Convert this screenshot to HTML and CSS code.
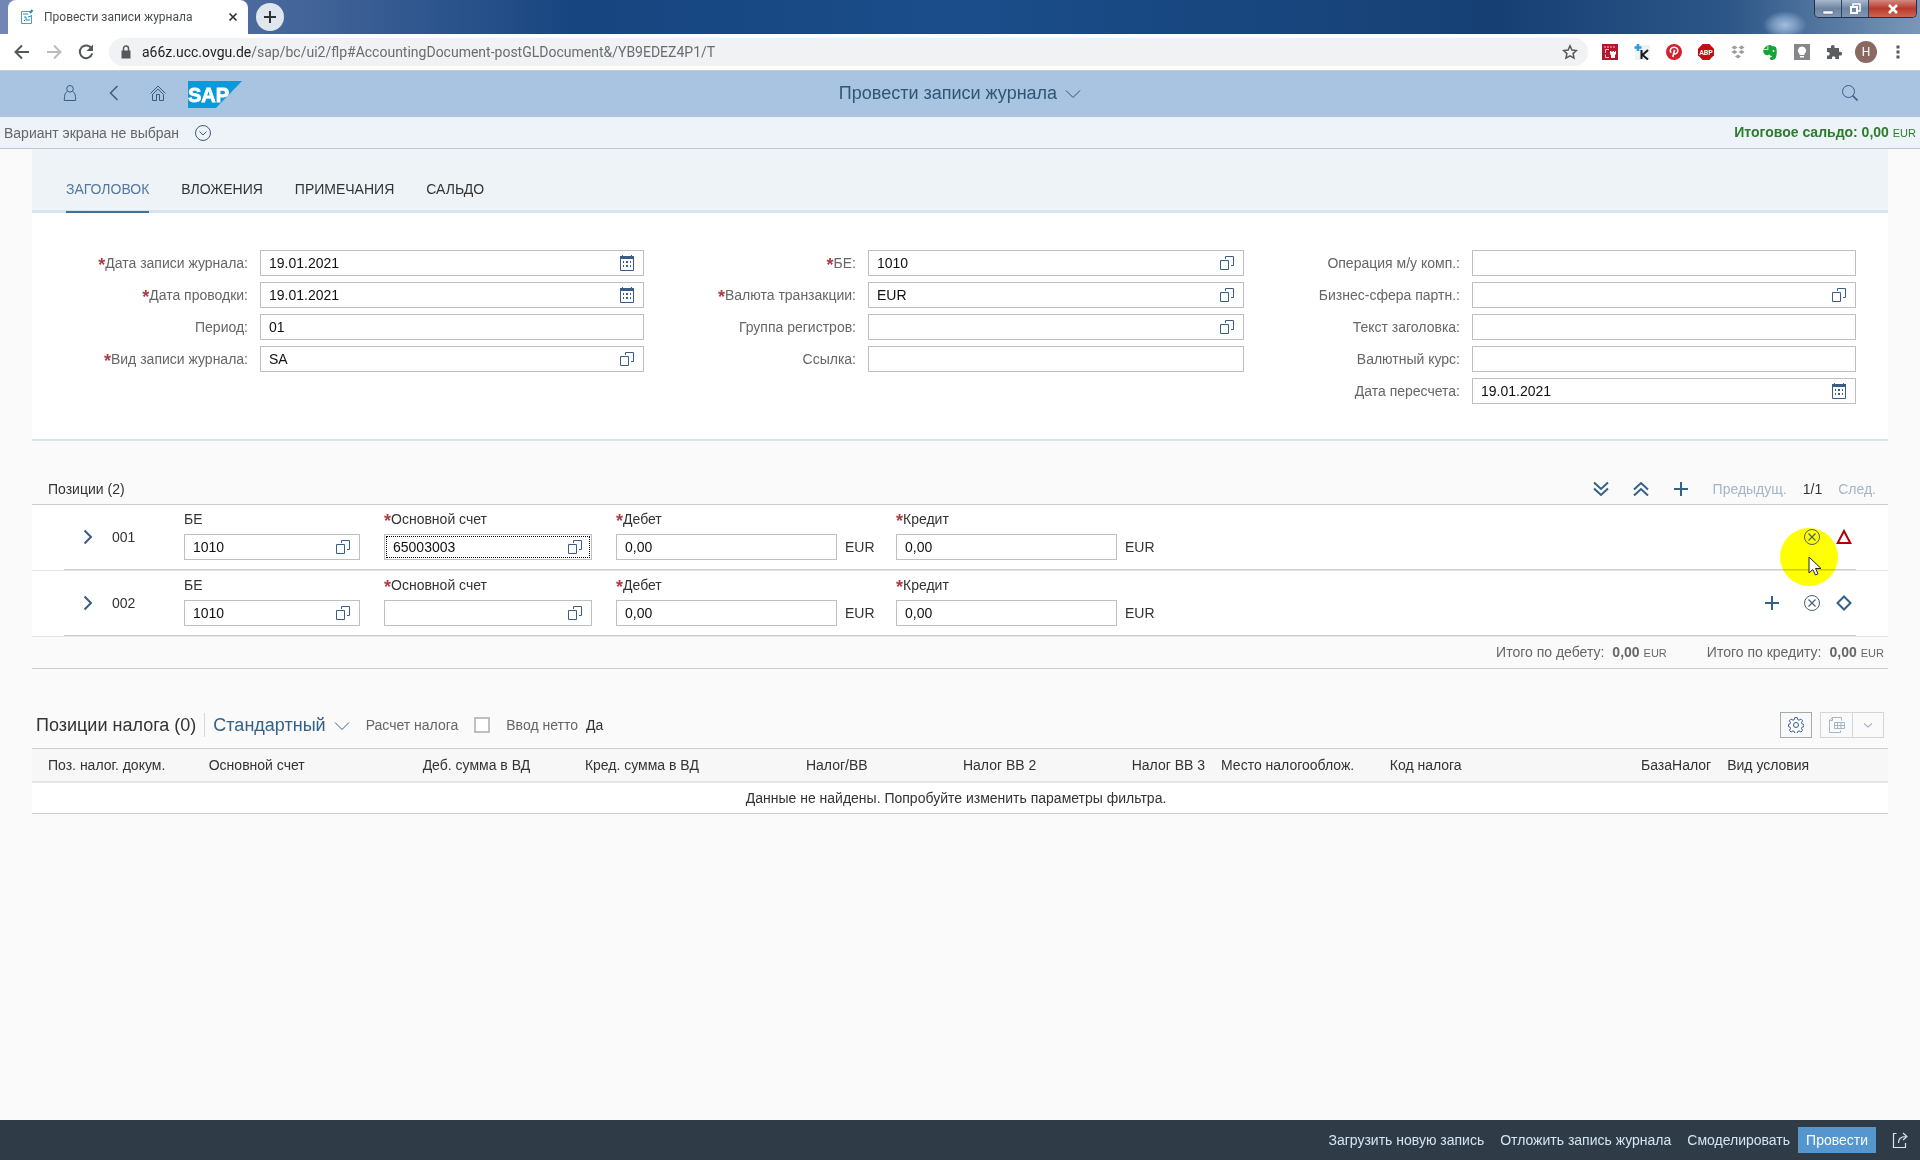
FILE: index.html
```html
<!DOCTYPE html>
<html lang="ru">
<head>
<meta charset="utf-8">
<title>Провести записи журнала</title>
<link rel="stylesheet" href="styles.css">
</head>
<body>
<svg class="sprite" aria-hidden="true">
  <symbol id="i-calendar" viewBox="0 0 16 16"><path d="M1.500 3v12.500h13V3" fill="none" stroke="currentColor"/><path d="M1 1h2V0h1v1h8V0h1v1h2v3H1z" fill="currentColor"/><path d="M4 6h1v2H4zM7 6h2v2H7zM11 6h1v2h-1zM4 10h1v2H4zM7 10h2v2H7zM11 10h1v2h-1z" fill="currentColor"/></symbol>
  <symbol id="i-help" viewBox="0 0 16 16"><path d="M6.500 4V1.500h8v9H12M1.500 5.500h8v9h-8z" fill="none" stroke="currentColor"/></symbol>
  <symbol id="i-right" viewBox="0 0 16 16"><path d="M4.500 1.500L11 8l-6.500 6.500" fill="none" stroke="currentColor" stroke-width="2"/></symbol>
  <symbol id="i-left" viewBox="0 0 16 16"><path d="M11.500 1L4.500 8l7 7" fill="none" stroke="currentColor" stroke-width="1.500"/></symbol>
  <symbol id="i-down" viewBox="0 0 16 16"><path d="M1 5.500l7 7 7-7" fill="none" stroke="currentColor"/></symbol>
  <symbol id="i-expand" viewBox="0 0 16 16"><path d="M1 1.500L8 8l7-6.500M1 7.500L8 14l7-6.500" fill="none" stroke="currentColor" stroke-width="2"/></symbol>
  <symbol id="i-collapse" viewBox="0 0 16 16"><path d="M1 8.500L8 2l7 6.500M1 14.500L8 8l7 6.500" fill="none" stroke="currentColor" stroke-width="2"/></symbol>
  <symbol id="i-plus" viewBox="0 0 16 16"><path d="M8 1v14M1 8h14" fill="none" stroke="currentColor" stroke-width="2"/></symbol>
  <symbol id="i-decline" viewBox="0 0 16 16"><circle cx="8" cy="8" r="7.500" fill="none" stroke="currentColor"/><path d="M4.500 4.500l7 7M11.500 4.500l-7 7" stroke="currentColor" stroke-width="1.200"/></symbol>
</svg>

<header class="browser">
  <div class="titlebar">
    <div class="tab">
      <svg class="favicon" viewBox="0 0 14 16" aria-hidden="true"><path d="M10 2.500H1.500v12h10V6" fill="none" stroke="#4a9fc9"/><path d="M3 5h5M4 8h2v3h4M4 11l1 1M8 8l3-1" stroke="#2a88bb" fill="none"/><path d="M10 4l2.500-3" stroke="#2a88bb" stroke-width="2"/></svg>
      <span class="tab-title">Провести записи журнала</span>
      <button class="tab-close" aria-label="Закрыть вкладку"><svg viewBox="0 0 10 10"><path d="M1.500 1.500l7 7M8.500 1.500l-7 7" stroke="#333" stroke-width="1.700"/></svg></button>
    </div>
    <button class="tab-new" aria-label="Новая вкладка"><svg viewBox="0 0 12 12"><path d="M6 0v12M0 6h12" stroke="#2e3338" stroke-width="2"/></svg></button>
    <div class="win-buttons">
      <button class="win" aria-label="Свернуть"><svg viewBox="0 0 12 12"><path d="M1 8h10v3H1z" fill="#fff" stroke="#556" stroke-width=".5"/></svg></button>
      <button class="win" aria-label="Развернуть"><svg viewBox="0 0 12 12"><path d="M4 3V1h7v7H9" fill="none" stroke="#fff" stroke-width="1.500"/><path d="M2 4h6v6H2z" fill="none" stroke="#fff" stroke-width="2"/></svg></button>
      <button class="win win-close" aria-label="Закрыть"><svg viewBox="0 0 12 12"><path d="M2 2l8 8M10 2l-8 8" stroke="#fff" stroke-width="2.600"/></svg></button>
    </div>
  </div>
  <div class="navbar">
    <div class="nav-buttons">
      <button aria-label="Назад"><svg viewBox="0 0 16 16"><path d="M15 8H2M8 1.500L1.500 8 8 14.500" fill="none" stroke="#54585c" stroke-width="2"/></svg></button>
      <button aria-label="Вперёд"><svg viewBox="0 0 16 16"><path d="M1 8h13M8 1.500L14.500 8 8 14.500" fill="none" stroke="#babcbe" stroke-width="2"/></svg></button>
      <button aria-label="Обновить"><svg viewBox="0 0 16 16"><path d="M13.500 4.500A6.300 6.300 0 1 0 14.200 9.500" fill="none" stroke="#54585c" stroke-width="2"/><path d="M15 0.500V7H8.500z" fill="#54585c"/></svg></button>
    </div>
    <div class="address">
      <svg class="lock" viewBox="0 0 10 14" aria-hidden="true"><path d="M0.500 5.500h9v8h-9z" fill="#54585c"/><path d="M2.500 6V3.500a2.500 2.500 0 0 1 5 0V6" fill="none" stroke="#54585c" stroke-width="1.500"/></svg>
      <span class="url"><span class="host">a66z.ucc.ovgu.de</span>/sap/bc/ui2/flp#AccountingDocument-postGLDocument&amp;/YB9EDEZ4P1/T</span>
      <svg class="star" viewBox="0 0 16 16" aria-hidden="true"><path d="M8 1.800l1.900 4.200 4.500.5-3.300 3.100.9 4.500L8 11.800l-4 2.300.9-4.500L1.600 6.500 6.100 6z" fill="none" stroke="#54585c" stroke-width="1.500"/></svg>
    </div>
    <div class="extensions">
      <svg viewBox="0 0 16 16"><path d="M0 0h16v16H0z" fill="#b3172c"/><path d="M2 3h12" stroke="#f0c4c9" stroke-dasharray="2 1"/><path d="M7 5.500H3.500V9M3.500 10.500v3H7" stroke="#f0c4c9" fill="none"/><path d="M8 7h1.500v1h1V7H12v1h1V7h1v3l-1 1v3H9v-3L8 10z" fill="#fff"/></svg>
      <svg viewBox="0 0 16 16"><path d="M1 1h15v15H1z" fill="#eef1f5"/><path d="M4 0v7M0.500 3.500h7" stroke="#2a9fd8" stroke-width="2.500"/><path d="M7.500 6v9M14 6l-5.500 5 5.500 4.500" fill="none" stroke="#15181c" stroke-width="2"/></svg>
      <svg viewBox="0 0 16 16"><circle cx="8" cy="8" r="8" fill="#d6202f"/><path d="M5 8.800C3.300 6 5 3.200 8.200 3.200c3 0 4 2.300 3.400 4.400-.7 2.600-3.200 2.900-3.700 1.500M8.600 5.800L6.800 13" fill="none" stroke="#fff" stroke-width="1.600"/></svg>
      <svg viewBox="0 0 16 16"><path d="M4.700 0h6.600L16 4.700v6.600L11.300 16H4.700L0 11.300V4.700z" fill="#c20d12"/><text x="8" y="10.500" text-anchor="middle" font-size="7" font-weight="700" fill="#fff">ABP</text></svg>
      <svg viewBox="0 0 16 16"><path d="M4.500 1.500l3 2-3 2-3-2zM11.500 1.500l3 2-3 2-3-2zM4.500 6l3 2-3 2-3-2zM11.500 6l3 2-3 2-3-2zM8 10.500l3 2-3 2-3-2z" fill="#999da0"/></svg>
      <svg viewBox="0 0 16 16"><path d="M5.500 1L1.500 5h4zM6.300 1v4.800H1.200C1 9 2.300 11 5 11.200c1.500 0 1.700-1 2.300-.7.800 1.600 2.300 1 2.600 1.800.4 1-2 .4-2 2.200 0 1 1 1.500 2.300 1.500 3.700 0 4.800-4 4.500-9.500C14.500 2 13 2.500 10 2 9 .8 7.500.8 6.300 1z" fill="#14a437"/><circle cx="11.500" cy="7" r="1" fill="#fff"/></svg>
      <svg viewBox="0 0 16 16"><path d="M0 0h16v16H0z" fill="#85878a"/><path d="M8 2.500a4 4 0 0 1 2.500 7.200V11h-5V9.700A4 4 0 0 1 8 2.500zM6 12h4v1.500H6z" fill="#fff"/></svg>
      <svg viewBox="0 0 16 16"><path d="M1 4h4.200C4.500 2 5.300 1 6.800 1s2.300 1 1.700 3H13v4c2-.6 3 .2 3 1.700s-1 2.300-3 1.700V15H9.300c.5-2-.2-2.800-1.600-2.800S5.600 13 6 15H1v-3.500c2 .4 2.700-.4 2.700-1.700S3 7.700 1 8z" fill="#5a5e62"/></svg>
      <span class="avatar">H</span>
      <svg viewBox="0 0 16 16"><path d="M6.500 1.500h3v3h-3zM6.500 6.500h3v3h-3zM6.500 11.500h3v3h-3z" fill="#54585c"/></svg>
    </div>
  </div>
</header>

<header class="shell">
  <nav class="shell-nav">
    <button aria-label="Профиль"><svg viewBox="0 0 16 16"><circle cx="8" cy="3.800" r="3.300" fill="none" stroke="currentColor"/><path d="M5.500 6.500C3.500 7.500 2.500 8.500 2.300 15.500h11.400C13.500 8.500 12.500 7.500 10.500 6.500" fill="none" stroke="currentColor"/></svg></button>
    <button aria-label="Назад"><svg><use href="#i-left"/></svg></button>
    <button aria-label="Домой"><svg viewBox="0 0 16 16"><path d="M.5 8.500L8 1l7.500 7.500M2.500 9.500L8 4l5.500 5.500V15.500h-4v-6h-3v6h-4V9" fill="none" stroke="currentColor"/></svg></button>
    <a class="logo" href="#" aria-label="SAP"><svg viewBox="0 0 54 27"><path d="M0 0h54L28 27H0z" fill="#0a9ad9"/><text x="0" y="21" font-size="20" font-weight="700" fill="#fff" stroke="#fff" stroke-width=".8">SAP</text></svg></a>
  </nav>
  <button class="shell-title"><span>Провести записи журнала</span><svg><use href="#i-down"/></svg></button>
  <button class="shell-search" aria-label="Поиск"><svg viewBox="0 0 16 16"><circle cx="6.500" cy="6.500" r="6" fill="none" stroke="currentColor"/><path d="M10.500 10.500l5 5" stroke="currentColor" stroke-width="1.600"/></svg></button>
</header>

<div class="variant-bar">
  <button class="variant"><span>Вариант экрана не выбран</span><svg viewBox="0 0 16 16"><circle cx="8" cy="8" r="7.500" fill="none" stroke="currentColor"/><path d="M4.500 6.500L8 10l3.500-3.500" fill="none" stroke="currentColor"/></svg></button>
  <p class="balance"><b>Итоговое сальдо: 0,00</b> <small>EUR</small></p>
</div>

<main class="page">
  <nav class="tabs">
    <a class="active" href="#header">ЗАГОЛОВОК</a>
    <a href="#attachments">ВЛОЖЕНИЯ</a>
    <a href="#notes">ПРИМЕЧАНИЯ</a>
    <a href="#balance">САЛЬДО</a>
  </nav>

  <form class="form" id="header">
    <div class="form-col col-a">
      <label class="req" for="f1">Дата записи журнала:</label><span class="field"><input id="f1" value="19.01.2021"><svg><use href="#i-calendar"/></svg></span>
      <label class="req" for="f2">Дата проводки:</label><span class="field"><input id="f2" value="19.01.2021"><svg><use href="#i-calendar"/></svg></span>
      <label for="f3">Период:</label><span class="field"><input id="f3" value="01"></span>
      <label class="req" for="f4">Вид записи журнала:</label><span class="field"><input id="f4" value="SA"><svg><use href="#i-help"/></svg></span>
    </div>
    <div class="form-col col-b">
      <label class="req" for="f5">БЕ:</label><span class="field"><input id="f5" value="1010"><svg><use href="#i-help"/></svg></span>
      <label class="req" for="f6">Валюта транзакции:</label><span class="field"><input id="f6" value="EUR"><svg><use href="#i-help"/></svg></span>
      <label for="f7">Группа регистров:</label><span class="field"><input id="f7"><svg><use href="#i-help"/></svg></span>
      <label for="f8">Ссылка:</label><span class="field"><input id="f8"></span>
    </div>
    <div class="form-col col-c">
      <label for="f9">Операция м/у комп.:</label><span class="field"><input id="f9"></span>
      <label for="f10">Бизнес-сфера партн.:</label><span class="field"><input id="f10"><svg><use href="#i-help"/></svg></span>
      <label for="f11">Текст заголовка:</label><span class="field"><input id="f11"></span>
      <label for="f12">Валютный курс:</label><span class="field"><input id="f12"></span>
      <label for="f13">Дата пересчета:</label><span class="field"><input id="f13" value="19.01.2021"><svg><use href="#i-calendar"/></svg></span>
    </div>
  </form>

  <section class="items">
    <div class="items-bar">
      <h2>Позиции (2)</h2>
      <div class="items-tools">
        <button aria-label="Развернуть все"><svg><use href="#i-expand"/></svg></button>
        <button aria-label="Свернуть все"><svg><use href="#i-collapse"/></svg></button>
        <button aria-label="Добавить"><svg><use href="#i-plus"/></svg></button>
      </div>
      <div class="pager"><button disabled>Предыдущ.</button><span>1/1</span><button disabled>След.</button></div>
    </div>
    <div class="item">
      <div class="item-body">
        <button class="item-open" aria-label="Открыть позицию"><svg><use href="#i-right"/></svg></button>
        <span class="item-no">001</span>
        <div class="cell w-be"><label for="a1">БЕ</label><span class="field"><input id="a1" value="1010"><svg><use href="#i-help"/></svg></span></div>
        <div class="cell w-acc"><label class="req" for="a2">Основной счет</label><span class="field focused"><input id="a2" value="65003003"><svg><use href="#i-help"/></svg></span></div>
        <div class="cell w-sum"><label class="req" for="a3">Дебет</label><span class="field"><input id="a3" value="0,00"></span></div><span class="unit">EUR</span>
        <div class="cell w-sum"><label class="req" for="a4">Кредит</label><span class="field"><input id="a4" value="0,00"></span></div><span class="unit">EUR</span>
        <div class="item-actions">
          <button aria-label="Удалить"><svg><use href="#i-decline"/></svg></button>
          <svg class="status error" viewBox="0 0 16 16"><path d="M8 2l6.300 12H1.700z" fill="none" stroke="currentColor" stroke-width="2"/></svg>
        </div>
      </div>
      <div class="spotlight"></div>
      <svg class="pointer" viewBox="0 0 14 20"><path d="M1 1v16l3.800-3.500L7.500 19l2.500-1.200-2.500-5.300H13z" fill="#fff" stroke="#222"/></svg>
    </div>
    <div class="item">
      <div class="item-body">
        <button class="item-open" aria-label="Открыть позицию"><svg><use href="#i-right"/></svg></button>
        <span class="item-no">002</span>
        <div class="cell w-be"><label for="b1">БЕ</label><span class="field"><input id="b1" value="1010"><svg><use href="#i-help"/></svg></span></div>
        <div class="cell w-acc"><label class="req" for="b2">Основной счет</label><span class="field"><input id="b2"><svg><use href="#i-help"/></svg></span></div>
        <div class="cell w-sum"><label class="req" for="b3">Дебет</label><span class="field"><input id="b3" value="0,00"></span></div><span class="unit">EUR</span>
        <div class="cell w-sum"><label class="req" for="b4">Кредит</label><span class="field"><input id="b4" value="0,00"></span></div><span class="unit">EUR</span>
        <div class="item-actions">
          <button class="add" aria-label="Добавить"><svg><use href="#i-plus"/></svg></button>
          <button aria-label="Удалить"><svg><use href="#i-decline"/></svg></button>
          <svg class="status" viewBox="0 0 16 16"><path d="M8 1.500L14.500 8 8 14.500 1.500 8z" fill="none" stroke="currentColor" stroke-width="2"/></svg>
        </div>
      </div>
    </div>
    <div class="totals">
      <p><span>Итого по дебету:</span><b>0,00</b><small>EUR</small></p>
      <p><span>Итого по кредиту:</span><b>0,00</b><small>EUR</small></p>
    </div>
  </section>

  <section class="tax">
    <div class="tax-bar">
      <h2>Позиции налога (0)</h2>
      <button class="view"><span>Стандартный</span><svg><use href="#i-down"/></svg></button>
      <label for="calc">Расчет налога</label>
      <input class="check" type="checkbox" id="calc">
      <span class="muted">Ввод нетто</span>
      <span>Да</span>
      <div class="tax-tools">
        <button class="boxed" aria-label="Настройки"><svg viewBox="0 0 16 16"><circle cx="8" cy="8" r="2.500" fill="none" stroke="currentColor"/><path d="M6.800.6h2.400l.5 2 1.300.6 1.900-1.100 1.700 1.700-1.100 1.900.6 1.300 1.900.5v2l-1.900.6-.6 1.400 1.100 1.900-1.700 1.600-1.900-1.100-1.300.6-.5 1.900H6.800l-.5-1.900L5 13.900 3.100 15l-1.700-1.600 1.100-1.900-.6-1.400L.5 9.500v-2L1.900 7l.6-1.300-1.100-1.900 1.700-1.700L5 3.200l1.300-.6z" fill="none" stroke="currentColor"/></svg></button>
        <div class="split">
          <button disabled aria-label="Экспорт"><svg viewBox="0 0 16 16"><path d="M12.500 3.500v-3h-9l-3 3v12h11V13.500M3.500 0.500v3h-3M5.500 5.500h10v6h-10zM5.500 8.500h10M8.500 5.500v6M12 5.500v6" fill="none" stroke="currentColor"/></svg></button>
          <button disabled aria-label="Варианты экспорта"><svg viewBox="0 0 16 16"><path d="M4 6.500L8 10l4-3.500" fill="none" stroke="currentColor" stroke-width="1.200"/></svg></button>
        </div>
      </div>
    </div>
    <table>
      <thead><tr>
        <th>Поз. налог. докум.</th><th>Основной счет</th><th class="num">Деб. сумма в ВД</th><th class="num">Кред. сумма в ВД</th><th class="num">Налог/ВВ</th><th class="num">Налог ВВ 2</th><th class="num">Налог ВВ 3</th><th>Место налогооблож.</th><th>Код налога</th><th class="num">БазаНалог</th><th>Вид условия</th>
      </tr></thead>
      <tbody><tr><td colspan="11">Данные не найдены. Попробуйте изменить параметры фильтра.</td></tr></tbody>
    </table>
  </section>
</main>

<footer class="footer">
  <button>Загрузить новую запись</button>
  <button>Отложить запись журнала</button>
  <button>Смоделировать</button>
  <button class="primary">Провести</button>
  <button class="share" aria-label="Поделиться"><svg viewBox="0 0 16 16"><path d="M4.500 1.500h-3v14h12V11M6.500 11c0-4 2-6.500 7.500-6.500M11 1l4 3.500L11 8" fill="none" stroke="currentColor" stroke-width="1.200"/></svg></button>
</footer>
</body>
</html>
```
FILE: styles.css
```css
*, *::before, *::after { box-sizing: border-box; }
body {
  margin: 0;
  min-height: 100vh;
  display: flex;
  flex-direction: column;
  background: #fafafa;
  color: #333;
  font: 14px/16px "Liberation Sans", Arial, sans-serif;
}
h2, p { margin: 0; font-weight: 400; }
a { color: inherit; text-decoration: none; }
svg { display: block; width: 16px; height: 16px; flex: none; }
.sprite { position: absolute; width: 0; height: 0; }
button {
  display: flex;
  align-items: center;
  justify-content: center;
  margin: 0;
  padding: 0;
  border: 0;
  background: none;
  color: inherit;
  font: inherit;
}

/* Browser window */
.browser { font-family: Roboto, "Open Sans", sans-serif; }
.titlebar {
  display: flex;
  height: 34px;
  padding-left: 8px;
  background: radial-gradient(ellipse 22px 14px at 1785px 25px, #a3bedc 0, #7596bd 55%, transparent), linear-gradient(90deg, #7387b5 0, #174580 30%, #1a4d8a 50%, #164074 78%, #2c5687 90%, #7a97b8 100%);
}
.tab {
  display: flex;
  align-items: center;
  width: 240px;
  height: 34px;
  padding: 0 10px 0 12px;
  border-radius: 8px 8px 0 0;
  background: #fff;
  color: #4a4d50;
  font-size: 12px;
}
.favicon { width: 14px; }
.tab-title { flex: 1; margin-left: 10px; white-space: nowrap; }
.tab-close svg { width: 10px; height: 10px; }
.tab-new {
  width: 28px;
  height: 28px;
  margin: 3px 0 0 8px;
  border-radius: 50%;
  background: #dfe6ee;
}
.tab-new svg { width: 12px; height: 12px; }
.win-buttons {
  display: flex;
  height: 18px;
  margin: 0 3px 0 auto;
  border: 1px solid #1f3350;
  border-top: 0;
  border-radius: 0 0 5px 5px;
  overflow: hidden;
}
.win { width: 27px; border-right: 1px solid #2c4260; background: linear-gradient(#a9b9cc, #6d84a2 50%, #7f96b3); }
.win svg { width: 12px; height: 12px; }
.win-close { width: 47px; border-right: 0; background: linear-gradient(#d38a82, #b93a2c 50%, #cc6553); }
.navbar {
  display: flex;
  align-items: center;
  height: 37px;
  padding: 0 14px;
  border-bottom: 1px solid #c5ccd4;
  background: #fff;
}
.nav-buttons { display: flex; gap: 16px; }
.address {
  display: flex;
  align-items: center;
  flex: 1;
  height: 28px;
  margin: 0 14px 0 15px;
  padding: 0 10px 0 12px;
  border-radius: 14px;
  background: #f0f2f3;
  color: #696d72;
  font-size: 14px;
}
.lock { width: 10px; height: 14px; margin-right: 11px; }
.url { flex: 1; white-space: nowrap; }
.host { color: #222; }
.extensions { display: flex; align-items: center; gap: 16px; }
.avatar {
  width: 22px;
  height: 22px;
  margin: 0 -3px;
  border-radius: 50%;
  background: #8a6a60;
  color: #fff;
  font-size: 12px;
  line-height: 22px;
  text-align: center;
}

/* Shell header */
.shell {
  display: grid;
  grid-template-columns: 1fr auto 1fr;
  align-items: center;
  height: 46px;
  padding: 0 62px 2px;
  background: #a9c4e0;
  color: #3a5c80;
}
.shell-nav { display: flex; align-items: center; gap: 28px; }
.shell .logo { margin-left: -6px; padding-top: 2px; }
.shell .logo svg { width: 54px; height: 27px; }
.shell-title { gap: 8px; color: #2f5674; font-size: 18px; }
.shell-search { justify-self: end; }

.variant-bar {
  display: flex;
  align-items: center;
  justify-content: space-between;
  height: 32px;
  padding: 0 4px;
  border-bottom: 1px solid #bfc6cc;
  background: #edf3f9;
}
.variant { gap: 16px; color: #666; }
.variant svg { color: #3a5c80; }
.balance { color: #2b7d2b; }
small { font-size: 11px; }

/* Page */
.page { flex: 1; padding: 0 32px 32px; }
.tabs {
  display: flex;
  gap: 32px;
  height: 64px;
  padding: 0 34px;
  border-bottom: 3px solid #d5e4ee;
  background: #edf3f7;
}
.tabs a { height: 64px; padding-top: 32px; border-bottom: 2px solid transparent; }
.tabs .active { border-bottom-color: #427191; color: #54779f; }

.form {
  display: grid;
  grid-template-columns: 580fr 600fr 612fr;
  padding: 37px 32px 35px;
  border-bottom: 2px solid #d3e5ef;
  background: #fff;
}
.form-col { display: grid; gap: 6px 12px; align-content: start; align-items: center; }
.col-a { grid-template-columns: 184fr 384fr; }
.col-b { grid-template-columns: 212fr 376fr; }
.col-c { grid-template-columns: 216fr 384fr; }
.form label { color: #666; text-align: right; }
.req::before { content: "*"; color: #b33a44; font-size: 18px; font-weight: 700; line-height: 0; vertical-align: -3px; }
.field {
  display: flex;
  align-items: center;
  height: 26px;
  padding-right: 8px;
  border: 1px solid #bfbfbf;
  background: #fff;
  color: #3a5c85;
}
.field input {
  flex: 1;
  min-width: 0;
  height: 24px;
  padding: 0 8px;
  border: 0;
  outline: 0;
  background: none;
  color: #111;
  font: inherit;
}
.focused { outline: 1px dotted #000; outline-offset: -3px; }

/* Line items */
.items-bar {
  display: flex;
  align-items: flex-end;
  height: 64px;
  padding: 0 12px 7px 16px;
  border-bottom: 1px solid #ccc;
}
.items-bar h2 { font-size: 14px; }
.items-tools { display: flex; gap: 24px; margin: 0 24px 0 auto; color: #346187; }
.pager { display: flex; gap: 16px; }
.pager button { color: #a3b5c9; }
.item { position: relative; border-bottom: 1px solid #e5e5e5; background: #fff; }
.item-body {
  display: flex;
  align-items: center;
  height: 65px;
  margin: 0 32px;
  border-bottom: 1px solid #ccc;
}
.item-open { width: 16px; margin: 0 8px 0 16px; color: #3a5c85; }
.item-no { width: 80px; padding-left: 8px; }
.cell { margin-right: 24px; padding-bottom: 4px; }
.cell label { display: block; margin-bottom: 7px; }
.w-be { width: 176px; }
.w-acc { width: 208px; }
.w-sum { width: 221px; margin-right: 8px; }
.unit { width: 51px; padding-top: 20px; }
.item-actions { position: relative; z-index: 3; display: flex; gap: 16px; margin-left: auto; padding-right: 4px; color: #346187; }
.item-actions .add { margin-right: 8px; }
.item-actions button:not(.add) { color: #4a5f72; }
.error { color: #b00000; }
.spotlight {
  position: absolute;
  right: 50px;
  top: 23px;
  z-index: 2;
  width: 58px;
  height: 58px;
  border-radius: 50%;
  background: #ff0;
  mix-blend-mode: multiply;
}
.pointer { position: absolute; right: 66px; top: 51px; z-index: 4; width: 14px; height: 20px; }
.totals {
  display: flex;
  justify-content: flex-end;
  align-items: center;
  gap: 40px;
  height: 32px;
  padding-right: 4px;
  border-bottom: 1px solid #ccc;
  color: #666;
}
.totals p { display: flex; align-items: baseline; }
.totals b { margin: 0 4px 0 8px; }

/* Tax items */
.tax-bar {
  display: flex;
  align-items: center;
  height: 47px;
  margin-top: 32px;
  padding: 0 4px;
}
.tax-bar h2 { padding-right: 8px; border-right: 1px solid #d9d9d9; font-size: 18px; line-height: 24px; }
.view { gap: 8px; margin: 0 16px 0 8px; color: #346187; font-size: 18px; }
.tax-bar label, .muted { color: #666; }
.check {
  appearance: none;
  width: 16px;
  height: 16px;
  margin: 0 16px;
  border: 2px solid #bfbfbf;
  background: #fff;
}
.muted { margin-right: 8px; }
.tax-tools { display: flex; gap: 8px; margin-left: auto; color: #3a5c85; }
.boxed { width: 32px; height: 26px; border: 1px solid #aaa; background: #f7f9fb; }
.split { display: flex; border: 1px solid #d5d5d5; color: #a3b5c9; }
.split button { width: 31px; height: 24px; }
.split button + button { border-left: 1px solid #d5d5d5; }
table { width: 100%; border-spacing: 0; table-layout: fixed; }
th { height: 35px; padding: 0 8px; border-top: 1px solid #ccc; border-bottom: 2px solid #e5e5e5; background: #f7f7f7; font-weight: 400; text-align: left; white-space: nowrap; }
th:first-child { padding-left: 16px; }
th.num { text-align: right; }
td { height: 31px; padding: 0 8px 0 0; border-bottom: 1px solid #ccc; background: #fff; text-align: center; }

/* Footer actions */
.footer {
  display: flex;
  justify-content: flex-end;
  align-items: center;
  height: 40px;
  padding: 0 12px 0 16px;
  background: #2f3c48;
  color: #d3e5f3;
}
.footer button { margin-left: 16px; }
.footer .primary { height: 26px; margin-left: 8px; padding: 0 8px; background: #5496cd; color: #fff; }
```
